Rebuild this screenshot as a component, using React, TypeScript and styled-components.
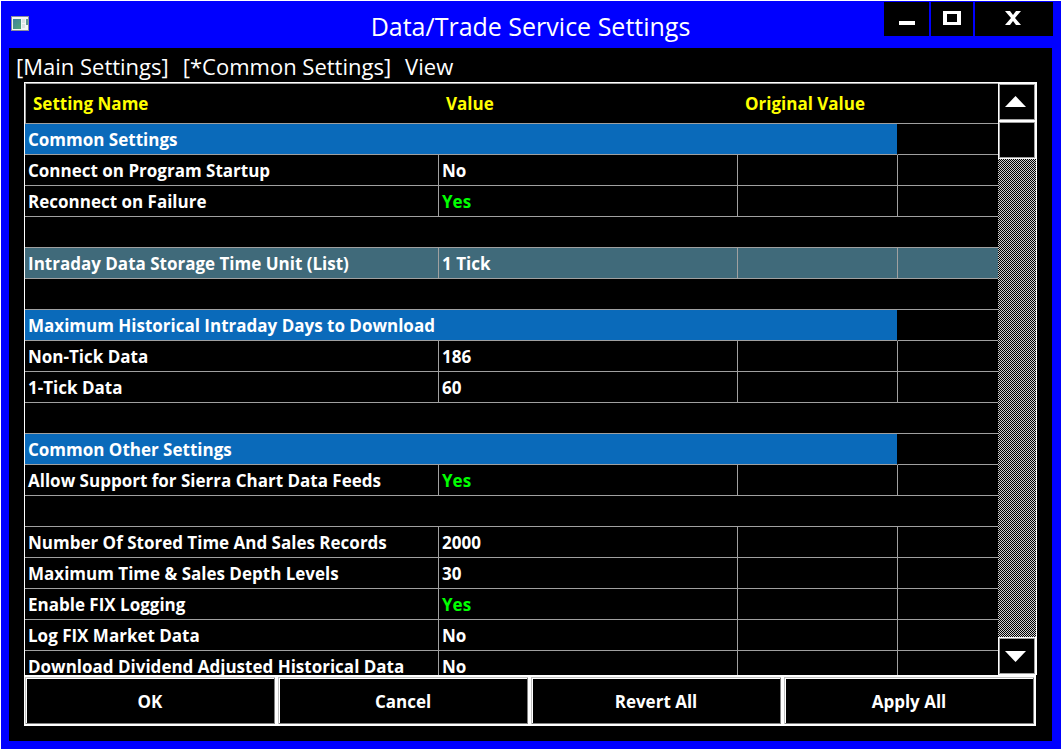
import React from 'react';
import styled, { createGlobalStyle } from 'styled-components';

const GlobalStyle = createGlobalStyle`
  * { box-sizing: border-box; }
  body { margin: 0; background: #fff; }
  button { font: inherit; color: inherit; cursor: pointer; }
`;

const Window = styled.div`
  display: flex;
  flex-direction: column;
  height: 100vh;
  background: #00f;
  border: 1px solid #fff;
  border-right: 0;
  padding: 0 9px 8px 8px;
  color: #fff;
  font-family: 'Open Sans', 'Noto Sans', sans-serif;
`;

const TitleBar = styled.header`
  position: relative;
  display: flex;
  align-items: center;
  justify-content: center;
  height: 47px;
  flex: none;
`;

const Title = styled.h1`
  margin: 0;
  font-size: 25px;
  font-weight: 400;
  line-height: 32px;
  padding-top: 2px;
`;

const AppIcon = styled.svg`
  position: absolute;
  left: 2px;
  top: 15px;
`;

const WindowControls = styled.div`
  position: absolute;
  top: 1px;
  right: -1px;
  display: flex;
  gap: 2px;
`;

const ControlButton = styled.button<{ $width: number }>`
  display: flex;
  align-items: center;
  justify-content: center;
  width: ${(p) => p.$width}px;
  height: 34px;
  padding: 0 0 2px;
  border: 0;
  background: #000;
`;

const Body = styled.main`
  display: flex;
  flex-direction: column;
  flex: 1;
  min-height: 0;
  background: #000;
  padding: 0 15px 15px;
`;

const MenuBar = styled.nav`
  display: flex;
  gap: 14px;
  height: 34px;
  margin-left: -8px;
  flex: none;
`;

const MenuItem = styled.button`
  padding: 0;
  border: 0;
  background: none;
  font-size: 22px;
  line-height: 36px;
`;

const GridFrame = styled.section`
  display: flex;
  flex: 1;
  min-height: 0;
  border: 1px solid #fff;
  border-bottom: 0;
`;

const GridView = styled.div`
  flex: 1;
  min-width: 0;
  overflow: hidden;
`;

const Grid = styled.table`
  width: 100%;
  table-layout: fixed;
  border-collapse: separate;
  border-spacing: 0;
  font-size: 17px;
  font-weight: 700;
`;

const Column = styled.col<{ $width?: number }>`
  width: ${(p) => (p.$width ? `${p.$width}px` : 'auto')};
`;

const HeadCell = styled.th`
  height: 41px;
  padding: 0 7px;
  border-top: 1px solid #a0a0a0;
  border-bottom: 1px solid #a0a0a0;
  color: #ff0;
  text-align: left;
  line-height: 24px;

  &:first-child {
    border-left: 1px solid #a0a0a0;
  }
`;

const Row = styled.tr<{ $selected?: boolean }>`
  height: 31px;
  background: ${(p) => (p.$selected ? '#406a7a' : '#000')};
`;

const Cell = styled.td<{ $on?: boolean }>`
  padding: 2px 3px 0;
  border-bottom: 1px solid #a0a0a0;
  border-right: 1px solid #a0a0a0;
  line-height: 24px;
  white-space: nowrap;
  color: ${(p) => (p.$on ? '#0f0' : '#fff')};

  &:last-child {
    border-right: 0;
  }
`;

const GroupCell = styled.th`
  padding: 2px 3px 0;
  border-bottom: 1px solid #a0a0a0;
  background: #0a6aba;
  background-clip: padding-box;
  line-height: 24px;
  text-align: left;
  border-right: 1px solid #000;
`;

const ScrollBar = styled.div`
  display: flex;
  flex-direction: column;
  width: 38px;
  flex: none;
  background: repeating-conic-gradient(#000 0 25%, #d0d0d0 0 50%) 0 0 / 2px 2px;
`;

const ScrollButton = styled.button`
  display: flex;
  align-items: center;
  justify-content: center;
  width: 38px;
  height: 38px;
  padding: 0;
  border: 1px solid #fff;
  background: #000;
  box-shadow: inset 0 0 0 1px #a0a0a0;

  &:last-child {
    margin-top: auto;
  }
`;

const ButtonBar = styled.footer`
  display: grid;
  grid-template-columns: repeat(4, 1fr);
  margin-right: 1px;
  flex: none;
`;

const ActionButton = styled.button`
  height: 51px;
  padding: 2px 0 0;
  border: solid #fff;
  border-width: 2px 2px 2px 1px;
  background: #000;
  box-shadow: inset 1px 1px #c0c0c0, inset -1px -1px #808080, inset 2px 2px #fff;
  font-size: 17px;
  font-weight: 700;
`;

type Entry =
  | { kind: 'group'; name: string }
  | { kind: 'blank' }
  | { kind: 'setting'; name: string; value: string; selected?: boolean };

const entries: Entry[] = [
  { kind: 'group', name: 'Common Settings' },
  { kind: 'setting', name: 'Connect on Program Startup', value: 'No' },
  { kind: 'setting', name: 'Reconnect on Failure', value: 'Yes' },
  { kind: 'blank' },
  { kind: 'setting', name: 'Intraday Data Storage Time Unit (List)', value: '1 Tick', selected: true },
  { kind: 'blank' },
  { kind: 'group', name: 'Maximum Historical Intraday Days to Download' },
  { kind: 'setting', name: 'Non-Tick Data', value: '186' },
  { kind: 'setting', name: '1-Tick Data', value: '60' },
  { kind: 'blank' },
  { kind: 'group', name: 'Common Other Settings' },
  { kind: 'setting', name: 'Allow Support for Sierra Chart Data Feeds', value: 'Yes' },
  { kind: 'blank' },
  { kind: 'setting', name: 'Number Of Stored Time And Sales Records', value: '2000' },
  { kind: 'setting', name: 'Maximum Time & Sales Depth Levels', value: '30' },
  { kind: 'setting', name: 'Enable FIX Logging', value: 'Yes' },
  { kind: 'setting', name: 'Log FIX Market Data', value: 'No' },
  { kind: 'setting', name: 'Download Dividend Adjusted Historical Data', value: 'No' },
];

function GridRow({ entry }: { entry: Entry }) {
  if (entry.kind === 'group') {
    return (
      <Row>
        <GroupCell colSpan={3} scope="rowgroup">{entry.name}</GroupCell>
        <Cell />
      </Row>
    );
  }
  if (entry.kind === 'blank') {
    return (
      <Row>
        <Cell colSpan={4} />
      </Row>
    );
  }
  return (
    <Row $selected={entry.selected}>
      <Cell>{entry.name}</Cell>
      <Cell $on={entry.value === 'Yes'}>{entry.value}</Cell>
      <Cell />
      <Cell />
    </Row>
  );
}

export default function App() {
  return (
    <>
      <GlobalStyle />
      <Window>
        <TitleBar>
          <AppIcon width="18" height="15" viewBox="0 0 18 15">
            <defs>
              <linearGradient id="pane" x1="0" y1="0" x2="1" y2="1">
                <stop offset="0" stopColor="#3f7fa0" />
                <stop offset="1" stopColor="#4fa878" />
              </linearGradient>
            </defs>
            <rect width="18" height="15" fill="#8a8f9c" />
            <rect x="1" y="1" width="16" height="13" fill="#f4f6f6" />
            <rect x="2" y="3" width="8" height="10" fill="url(#pane)" />
            <rect x="11" y="3" width="3" height="4" fill="#dfe3e6" />
            <rect x="11" y="8" width="3" height="4" fill="#dfe3e6" />
            <rect x="15" y="3" width="2" height="6" fill="#5f9a94" />
          </AppIcon>
          <Title>Data/Trade Service Settings</Title>
          <WindowControls>
            <ControlButton $width={45} aria-label="Minimize">
              <svg width="15" height="14" viewBox="0 0 15 14" overflow="visible"><rect y="10" width="16" height="4" fill="#fff" /></svg>
            </ControlButton>
            <ControlButton $width={42} aria-label="Maximize">
              <svg width="18" height="14" viewBox="0 0 18 14"><path d="M0 0h18v14H0zM4 3v8h10V3z" fill="#fff" fillRule="evenodd" /></svg>
            </ControlButton>
            <ControlButton $width={78} aria-label="Close">
              <svg width="18" height="14" viewBox="0 0 18 14"><path d="M0 0h5l3 4 3-4h5l-6 7 6 7h-5l-3-4-3 4H0l6-7z" fill="#fff" /></svg>
            </ControlButton>
          </WindowControls>
        </TitleBar>
        <Body>
          <MenuBar>
            <MenuItem>[Main Settings]</MenuItem>
            <MenuItem>[*Common Settings]</MenuItem>
            <MenuItem>View</MenuItem>
          </MenuBar>
          <GridFrame>
            <GridView>
              <Grid>
                <colgroup>
                  <Column />
                  <Column $width={299} />
                  <Column $width={160} />
                  <Column $width={100} />
                </colgroup>
                <thead>
                  <tr>
                    <HeadCell scope="col">Setting Name</HeadCell>
                    <HeadCell scope="col">Value</HeadCell>
                    <HeadCell scope="col">Original Value</HeadCell>
                    <HeadCell as="td" />
                  </tr>
                </thead>
                <tbody>
                  {entries.map((entry, i) => (
                    <GridRow key={i} entry={entry} />
                  ))}
                </tbody>
              </Grid>
            </GridView>
            <ScrollBar>
              <ScrollButton aria-label="Scroll up">
                <svg width="24" height="12" viewBox="0 0 24 12"><path d="M0 11L10.5 0 21 11z" fill="#fff" /></svg>
              </ScrollButton>
              <ScrollButton aria-label="Scroll position" />
              <ScrollButton aria-label="Scroll down">
                <svg width="24" height="12" viewBox="0 0 24 12"><path d="M0 1h21L10.5 12z" fill="#fff" /></svg>
              </ScrollButton>
            </ScrollBar>
          </GridFrame>
          <ButtonBar>
            <ActionButton>OK</ActionButton>
            <ActionButton>Cancel</ActionButton>
            <ActionButton>Revert All</ActionButton>
            <ActionButton>Apply All</ActionButton>
          </ButtonBar>
        </Body>
      </Window>
    </>
  );
}
